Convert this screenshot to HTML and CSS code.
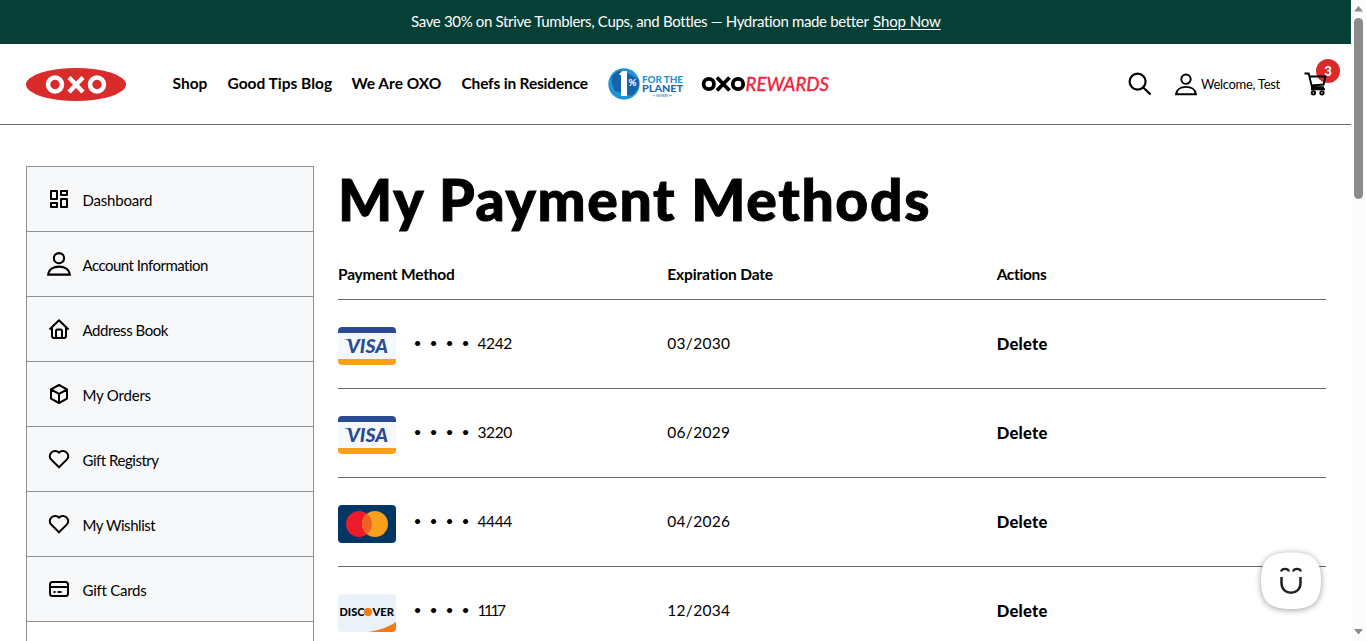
FILE: index.html
```html
<!DOCTYPE html>
<html lang="en">
<head>
<meta charset="utf-8">
<title>My Payment Methods</title>
<link rel="stylesheet" href="styles.css">
</head>
<body>
<svg class="defs" aria-hidden="true">
  <symbol id="user" viewBox="0 0 24 24"><g fill="none" stroke="currentColor" stroke-width="2.1"><circle cx="12" cy="6.200" r="5.100"/><path d="M1.200 22.600C1.800 17.600 6.300 14.600 12 14.600s10.200 3 10.800 8z"/></g></symbol>
  <symbol id="heart" viewBox="0 0 24 24"><path d="M12 20.300 4.300 12.600C2.700 11 2.500 8.400 3.600 6.500 5.300 3.500 9.800 3.100 12 5.600c2.200-2.500 6.700-2.100 8.400.900 1.100 1.900.900 4.500-.700 6.100z" fill="none" stroke="currentColor" stroke-width="2"/></symbol>
  <symbol id="visa" viewBox="0 0 58 38"><path d="M0 6h58v26H0z" fill="#f4f8fc"/><path d="M0 6V4a4 4 0 0 1 4-4h50a4 4 0 0 1 4 4v2z" fill="#2a4b94"/><path d="M0 32v2a4 4 0 0 0 4 4h50a4 4 0 0 0 4-4v-2z" fill="#fa9f1d"/><path d="M6 12.300h6.500l2 6-2-3.500Q10 13 6 12.300z" fill="#2a4b94"/><text x="9" y="26" class="visa-text" textLength="41" lengthAdjust="spacingAndGlyphs">VISA</text></symbol>
</svg>
<div class="window">
<div class="page">
  <div class="promo"><span class="promo-text">Save 30% on Strive Tumblers, Cups, and Bottles — Hydration made better</span><a class="promo-link">Shop Now</a></div>
  <header class="header">
    <svg class="logo" width="100" height="34" viewBox="0 0 100 34"><ellipse cx="50" cy="17.500" rx="50" ry="16.500" fill="#da2b2b"/><g fill="none" stroke="#fff" stroke-width="4.500"><circle cx="29" cy="17.500" r="7"/><circle cx="71" cy="17.500" r="7"/><path d="m43 10.500 14 14.500M57 10.500 43 25"/></g></svg>
    <nav class="nav">
      <a class="n1">Shop</a><a class="n2">Good Tips Blog</a><a class="n3">We Are OXO</a><a class="n4">Chefs in Residence</a>
      <svg class="planet" width="76" height="34" viewBox="0 0 76 34"><circle cx="16" cy="17" r="15.700" fill="#2292d2"/><path d="M4 9Q9 3 16 4l7 4 8 5q1 10-8 16l-8-3-8-2q-4-7-3-15z" fill="#1763ab"/><path d="M11 7.500 14 4h5v25h-6V8z" fill="#fff"/><text x="20.500" y="19" class="pct" textLength="8" lengthAdjust="spacingAndGlyphs">%</text><text x="34" y="15.800" class="planet-text" textLength="41" lengthAdjust="spacingAndGlyphs">FOR THE</text><text x="34" y="24.800" class="planet-text dark" textLength="41" lengthAdjust="spacingAndGlyphs">PLANET</text><path d="M45 28.700h2m14 0h3" stroke="#66b8df"/><text x="48" y="30" class="member" textLength="12" lengthAdjust="spacingAndGlyphs">MEMBER</text></svg>
      <svg class="rewards" width="130" height="24" viewBox="0 0 130 24"><g fill="none" stroke="#000" stroke-width="3.800"><circle cx="7.800" cy="12" r="5.200"/><circle cx="37" cy="12" r="5.200"/><path d="m16 5.500 12.500 13M28.500 5.500 16 18.500"/></g><text x="44.500" y="18.800" class="rewards-text" textLength="83.500" lengthAdjust="spacingAndGlyphs">REWARDS</text></svg>
    </nav>
    <div class="tools">
      <svg width="24" height="24" viewBox="0 0 24 24"><g fill="none" stroke="#000" stroke-width="2.200"><circle cx="9.600" cy="9.600" r="8"/><path d="m15.200 15.500 7.300 7"/></g></svg>
      <svg class="head-user" width="22" height="23"><use href="#user" width="22" height="23"/></svg>
      <span class="welcome">Welcome, Test</span>
      <div class="cart"><span class="badge">3</span><svg width="24" height="24" viewBox="0 0 24 24"><g fill="none" stroke="#000" stroke-width="1.900"><path d="M.500 1.500h4.200L8 15.300h12M6 4.500h15.500L19.600 12.500 7.600 13.500M7 17.300h14"/><circle cx="9.400" cy="20.800" r="1.700"/><circle cx="18" cy="20.800" r="1.700"/></g></svg></div>
    </div>
  </header>
  <main class="main">
    <aside class="side">
      <a class="item"><svg class="icon" viewBox="0 0 24 24"><path d="M4 4h6v8H4zm10 0h6v4h-6zm0 8h6v8h-6zM4 16h6v4H4z" class="line"/></svg><span class="s1">Dashboard</span></a>
      <a class="item"><svg class="icon"><use href="#user"/></svg><span class="s2">Account Information</span></a>
      <a class="item"><svg class="icon" viewBox="0 0 24 24"><path d="m2.500 12.500 9.500-9.300 9.500 9.300M5 10.500V19q0 2 2 2h10q2 0 2-2v-8.500M9 21v-7q0-1.500 1.500-1.500h3q1.500 0 1.500 1.500v7" class="line"/></svg><span class="s3">Address Book</span></a>
      <a class="item"><svg class="icon" viewBox="0 0 24 24"><path d="m12 3 8 4.300v9.400L12 21l-8-4.300V7.300zM4 7.500l8 4.300 8-4.300M12 12v9" class="line"/></svg><span class="s4">My Orders</span></a>
      <a class="item"><svg class="icon"><use href="#heart"/></svg><span class="s5">Gift Registry</span></a>
      <a class="item"><svg class="icon"><use href="#heart"/></svg><span class="s6">My Wishlist</span></a>
      <a class="item"><svg class="icon" viewBox="0 0 24 24"><rect x="3" y="5" width="18" height="14" rx="2.500" class="line"/><path d="M3 10h18M6.500 15h2m2 0h4" class="line"/></svg><span class="s7">Gift Cards</span></a>
      <a class="item plain"></a>
    </aside>
    <section class="content">
      <h1>My Payment Methods</h1>
      <div class="row head"><span class="h1c">Payment Method</span><span class="h2c">Expiration Date</span><span class="h3c">Actions</span></div>
      <div class="row"><div class="method"><svg class="card"><use href="#visa"/></svg><span class="dots"><i>•</i><i>•</i><i>•</i><i>•</i></span><span class="num">4242</span></div><span class="date">03/2030</span><b class="del">Delete</b></div>
      <div class="row"><div class="method"><svg class="card"><use href="#visa"/></svg><span class="dots"><i>•</i><i>•</i><i>•</i><i>•</i></span><span class="num">3220</span></div><span class="date">06/2029</span><b class="del">Delete</b></div>
      <div class="row"><div class="method"><svg class="card" viewBox="0 0 58 38"><rect width="58" height="38" rx="4" fill="#023664"/><circle cx="21" cy="19" r="13" fill="#ed1c2a"/><circle cx="37" cy="19" r="13" fill="#faa01f"/><path d="M29 8.800a13 13 0 0 1 0 20.400 13 13 0 0 1 0-20.400z" fill="#f26122"/></svg><span class="dots"><i>•</i><i>•</i><i>•</i><i>•</i></span><span class="num">4444</span></div><span class="date">04/2026</span><b class="del">Delete</b></div>
      <div class="row"><div class="method"><svg class="card" viewBox="0 0 58 38"><rect width="58" height="38" rx="4" fill="#eaf1f9"/><path d="M31 38q16-2.500 27-10v6a4 4 0 0 1-4 4z" fill="#f47a16"/><text x="1.500" y="22" class="disc" textLength="25" lengthAdjust="spacingAndGlyphs">DISC</text><circle cx="30" cy="18" r="4.200" fill="#f47a16"/><text x="34.500" y="22" class="disc" textLength="21.500" lengthAdjust="spacingAndGlyphs">VER</text></svg><span class="dots"><i>•</i><i>•</i><i>•</i><i>•</i></span><span class="num n1117">1117</span></div><span class="date">12/2034</span><b class="del">Delete</b></div>
    </section>
  </main>
</div>
<div class="scroll"><svg width="15" height="18" viewBox="0 0 15 18"><path d="M3 11.500h9L7.500 6z" fill="#8b8b8b"/></svg><div class="thumb"></div><svg class="down" width="15" height="17" viewBox="0 0 15 17"><path d="M3 5h9l-4.500 5.500z" fill="#8b8b8b"/></svg></div>
</div>
<div class="chat"><svg width="76" height="72" viewBox="0 0 76 72"><path d="M38 8.500c21 0 30 6 30 28s-9 28.500-30 28.500S8 58.500 8 36.500s9-28 30-28z" fill="#fff"/><g fill="none" stroke="#222"><path d="M28.500 33v6c0 13 19 13 19 0v-6" stroke-width="2.500"/><path d="M28 27.500c1-3.500 7-3.500 8 0m4 0c1-3.500 7-3.500 8 0" stroke-width="2.200"/></g></svg></div>
</body>
</html>
```
FILE: styles.css
```css
* { box-sizing: border-box; }
body { margin: 0; height: 641px; overflow: hidden; background: #fff; color: #000; font: 15.5px/24px Lato, sans-serif; }
a, span, h1, b { white-space: nowrap; }
.defs { display: none; }
.window { display: flex; height: 641px; }
.page { width: 1351px; height: 641px; overflow: hidden; }
.promo { height: 44px; padding: 0 0 2px 411px; display: flex; align-items: center; background: #063f36; color: #fff; font-size: 15px; }
.promo-text { width: 462px; letter-spacing: -.34px; }
.promo-link { text-decoration: underline; text-underline-offset: 2px; letter-spacing: -.1px; }
.header { height: 81px; padding-left: 26px; border-bottom: 1px solid #666; display: flex; align-items: center; }
.nav { margin-left: 46.500px; display: flex; align-items: center; font-weight: 700; }
.nav a { margin-top: -2px; }
.n1 { width: 55px; }
.n2 { width: 124px; }
.n3 { width: 110px; }
.n4 { width: 146px; letter-spacing: -.18px; }
.rewards { margin-left: 17px; }
.planet-text { font: 900 9px Lato, sans-serif; fill: #2594cf; }
.dark { fill: #1a6caf; }
.pct { font: 700 9px Lato, sans-serif; fill: #fff; }
.member { font: 700 3.500px Lato, sans-serif; fill: #3b99cf; }
.rewards-text { font: italic 400 18.500px Lato, sans-serif; fill: #f0233c; stroke: #f0233c; stroke-width: .4px; }
.tools { margin-left: auto; padding-right: 23px; display: flex; align-items: center; }
.head-user { margin-left: 23px; }
.welcome { width: 103px; margin-left: 4px; font-size: 13px; letter-spacing: -.3px; }
.cart { position: relative; width: 24px; height: 24px; }
.cart svg { position: relative; display: block; }
.badge { position: absolute; left: 12px; top: -13px; width: 24px; height: 24px; border-radius: 50%; background: #da2b2b; color: #fff; text-align: center; font-weight: 900; font-size: 13px; }
.main { padding: 41px 25px 0 26px; display: flex; gap: 24px; }
.side { width: 288px; border: 1px solid #8e9194; border-bottom: 0; flex: none; font-size: 15px; }
.item { display: flex; align-items: center; height: 65px; padding: 0 20px; border-bottom: 1px solid #8e9194; background: #f7f8fa; }
.item span { margin: 1px 0 0 11.500px; }
.s1, .s4 { letter-spacing: -.2px; }
.s2 { letter-spacing: -.52px; }
.s3, .s6 { letter-spacing: -.45px; }
.s5 { letter-spacing: -.48px; }
.s7 { letter-spacing: -.25px; }
.plain { background: #fff; }
.icon { width: 24px; height: 24px; flex: none; }
.line { fill: none; stroke: #000; stroke-width: 2; stroke-linejoin: round; }
.content { width: 988px; }
h1 { margin: 0; height: 84px; font-size: 57px; line-height: 66px; font-weight: 900; letter-spacing: .9px; word-spacing: 0; -webkit-text-stroke: 1px #000; letter-spacing: 1.65px; }
.row { display: grid; grid-template-columns: repeat(3, 1fr); height: 89px; padding-bottom: 2px; align-items: center; border-bottom: 1px solid #666; }
.head { height: 50px; padding-bottom: 1px; font-weight: 700; }
.h1c { letter-spacing: -.2px; }
.h2c { letter-spacing: -.13px; }
.h3c { letter-spacing: -.35px; }
.method { display: flex; align-items: center; }
.card { width: 58px; height: 38px; margin: 5px 13.500px 0 0; }
.dots { display: flex; width: 68px; }
.dots i { width: 16px; text-align: center; font-style: normal; font-size: 14px; }
.num { letter-spacing: -.4px; }
.n1117 { letter-spacing: -2.500px; }
.date { letter-spacing: .28px; }
.del { margin-top: 2px; font-size: 16.500px; font-weight: 900; letter-spacing: .3px; }
.visa-text { font: italic 900 19px Lato, sans-serif; letter-spacing: 0; fill: #2a4b94; }
.disc { font: 900 10.500px Lato, sans-serif; }
.scroll { width: 15px; background: #fcfcfc; display: flex; flex-direction: column; align-items: center; }
.thumb { width: 9px; height: 181px; border-radius: 5px; background: #8b8b8b; }
.down { margin-top: auto; }
.chat { position: absolute; left: 1253px; top: 544px; width: 76px; height: 72px; filter: drop-shadow(0 1px 3px rgba(0,0,0,.4)); }
```
